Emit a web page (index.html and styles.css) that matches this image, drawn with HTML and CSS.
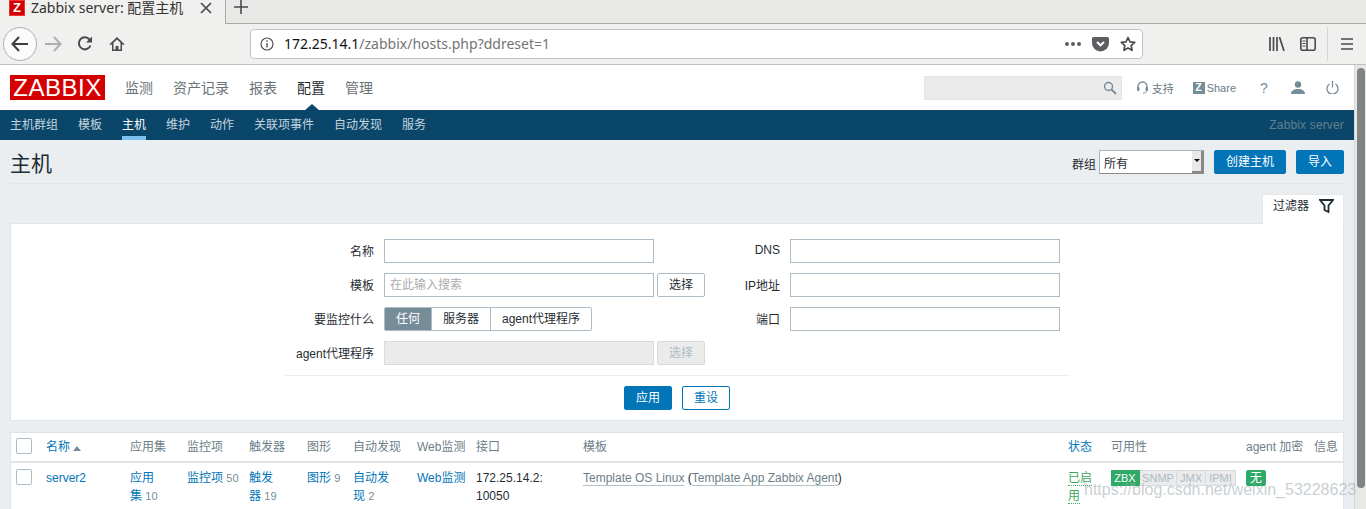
FILE: index.html
```html
<!DOCTYPE html>
<html lang="zh">
<head>
<meta charset="utf-8">
<title>Zabbix server: 配置主机</title>
<link rel="stylesheet" href="styles.css">
</head>
<body>
<div class="tabbar">
  <div class="tab">
    <span class="favicon">Z</span>
    <span class="tab-title">Zabbix server: 配置主机</span>
    <svg class="tab-close" width="12" height="12" viewBox="0 0 12 12"><path d="M1 1l10 10M11 1L1 11" stroke="#4a4a4f" stroke-width="1.7"/></svg>
  </div>
  <div class="newtab"><svg width="14" height="14" viewBox="0 0 14 14"><path d="M7 0v14M0 7h14" stroke="#4a4a4f" stroke-width="1.6"/></svg></div>
</div>
<div class="toolbar">
  <div class="backbtn"><svg width="18" height="16" viewBox="0 0 18 16"><path d="M8 1L1.500 8 8 15M2 8h15" fill="none" stroke="#3d3d40" stroke-width="2"/></svg></div>
  <svg class="ticon fwd" width="17" height="16" viewBox="0 0 17 16"><path d="M9 1l6.500 7L9 15M15 8H0" fill="none" stroke="#aeaeb0" stroke-width="2"/></svg>
  <svg class="ticon reload" width="16" height="16" viewBox="0 0 16 16"><path d="M13.500 9.500A6 6 0 1 1 12.500 3.500" fill="none" stroke="#4a4a4f" stroke-width="2"/><path d="M15 .5v6H9z" fill="#4a4a4f"/></svg>
  <svg class="ticon home" width="16" height="16" viewBox="0 0 16 16"><path d="M8 1L.5 8.200l1.200 1.100L3 8.100V15h10V8.100l1.300 1.200 1.200-1.100zM6.500 13.500V10h3v3.500H11.500V6.800L8 3.500 4.500 6.800v6.700z" fill="#4a4a4f" fill-rule="evenodd"/></svg>
  <div class="urlbar">
    <svg class="info" width="14" height="14" viewBox="0 0 14 14"><circle cx="7" cy="7" r="6" fill="none" stroke="#55555a" stroke-width="1.200"/><path d="M7 6v4.500M7 3.200v1.600" stroke="#55555a" stroke-width="1.400"/></svg>
    <span class="url"><b>172.25.14.1</b>/zabbix/hosts.php?ddreset=1</span>
    <span class="dots"><i></i><i></i><i></i></span>
    <svg class="pocket" width="17" height="16" viewBox="0 0 17 16"><path d="M1.500 1h14A1.500 1.500 0 0 1 17 2.500V7A8.500 8.500 0 0 1 0 7V2.500A1.500 1.500 0 0 1 1.500 1z" fill="#5f5f63"/><path d="M5 6l3.500 3.300L12 6" fill="none" stroke="#fff" stroke-width="2"/></svg>
    <svg class="star" width="16" height="16" viewBox="0 0 16 16"><path d="M8 1.500l2 4.300 4.700.6-3.500 3.200.9 4.700L8 12l-4.100 2.300.9-4.700L1.300 6.400 6 5.800z" fill="none" stroke="#4a4a4f" stroke-width="1.700" stroke-linejoin="round"/></svg>
  </div>
  <svg class="ticon lib" width="16" height="14" viewBox="0 0 16 14"><path d="M1 0v14M4.500 0v14M8 0v14M10.500 0l4.500 14" stroke="#4a4a4f" stroke-width="1.700"/></svg>
  <svg class="ticon side" width="16" height="14" viewBox="0 0 16 14"><rect x=".8" y=".8" width="14.400" height="12.400" rx="2" fill="none" stroke="#4a4a4f" stroke-width="1.600"/><path d="M7 1v12" stroke="#4a4a4f" stroke-width="1.600"/><path d="M2.500 4H5.500M2.500 6.500H5.500M2.500 9H5.500" stroke="#4a4a4f"/></svg>
  <span class="tsep"></span>
  <svg class="ticon menu" width="12" height="12" viewBox="0 0 12 12"><path d="M0 1h12M0 6h12M0 11h12" stroke="#4a4a4f" stroke-width="1.700"/></svg>
</div>
<div class="viewport">
  <div class="page">
    <header class="topnav">
      <div class="logo">ZABBIX</div>
      <nav class="mainmenu">
        <a>监测</a><a>资产记录</a><a>报表</a><a class="current">配置</a><a>管理</a>
      </nav>
      <div class="topright">
        <div class="search"><svg width="14" height="14" viewBox="0 0 14 14"><circle cx="5.500" cy="5.500" r="4" fill="none" stroke="#768d99" stroke-width="1.500"/><path d="M8.500 8.500L13 13" stroke="#768d99" stroke-width="1.800"/></svg></div>
        <a class="tl support"><svg width="11" height="13" viewBox="0 0 11 13"><path d="M1 8V5.500a4.500 4.500 0 0 1 9 0V8" fill="none" stroke="#768d99" stroke-width="1.400"/><rect x="0" y="6" width="2.500" height="4" rx="1" fill="#768d99"/><rect x="8.500" y="6" width="2.500" height="4" rx="1" fill="#768d99"/><path d="M9.500 10c0 1.500-1.500 2-3.500 2" fill="none" stroke="#768d99"/></svg>支持</a>
        <a class="tl share"><span class="zbox">Z</span>Share</a>
        <a class="tl help">?</a>
        <svg class="tico user" width="14" height="13" viewBox="0 0 14 13"><circle cx="7" cy="3.500" r="3.200" fill="#768d99"/><path d="M0 13c0-3.500 3-5 7-5s7 1.500 7 5z" fill="#768d99"/></svg>
        <svg class="tico power" width="13" height="13" viewBox="0 0 13 13"><path d="M3.500 3a5.500 5.500 0 1 0 6 0" fill="none" stroke="#768d99" stroke-width="1.300"/><path d="M6.500 0v6.500" stroke="#768d99" stroke-width="1.300"/></svg>
      </div>
    </header>
    <div class="subnav">
      <a>主机群组</a><a>模板</a><a class="current">主机</a><a>维护</a><a>动作</a><a>关联项事件</a><a>自动发现</a><a>服务</a>
      <span class="server">Zabbix server</span>
    </div>
    <main class="content">
      <div class="headrow">
        <h1>主机</h1>
        <div class="headctl">
          <label class="grouplabel">群组</label>
          <div class="selectbox"><span class="selval">所有</span><span class="selbtn"><i></i></span></div>
          <button class="btn primary create">创建主机</button>
          <button class="btn primary import">导入</button>
        </div>
      </div>
      <div class="filtertabrow">
        <div class="filtertab">过滤器<svg width="15" height="14" viewBox="0 0 15 14"><path d="M1 1h13L9.500 6.500V13L5.500 11V6.500z" fill="none" stroke="#1f2c33" stroke-width="1.800"/></svg></div>
      </div>
      <section class="filter">
        <div class="filtercols">
          <div class="fcol left">
            <div class="frow"><label>名称</label><div class="input wide"></div></div>
            <div class="frow"><label>模板</label><div class="input wide ph">在此输入搜索</div><button class="btn ghost">选择</button></div>
            <div class="frow"><label>要监控什么</label>
              <div class="radio"><span class="on">任何</span><span>服务器</span><span>agent代理程序</span></div></div>
            <div class="frow"><label>agent代理程序</label><div class="input wide disabled"></div><button class="btn ghost dis">选择</button></div>
          </div>
          <div class="fcol right">
            <div class="frow"><label>DNS</label><div class="input wide"></div></div>
            <div class="frow"><label>IP地址</label><div class="input wide"></div></div>
            <div class="frow"><label>端口</label><div class="input wide"></div></div>
          </div>
        </div>
        <div class="factions">
          <button class="btn primary apply">应用</button>
          <button class="btn outline">重设</button>
        </div>
      </section>
      <section class="hosts">
        <div class="trow thead">
          <div class="c c-check"><span class="check"></span></div>
          <div class="c c-name"><a>名称</a><span class="sort"></span></div>
          <div class="c c-app">应用集</div>
          <div class="c c-item">监控项</div>
          <div class="c c-trig">触发器</div>
          <div class="c c-graph">图形</div>
          <div class="c c-disc">自动发现</div>
          <div class="c c-web">Web监测</div>
          <div class="c c-if">接口</div>
          <div class="c c-tpl">模板</div>
          <div class="c c-stat"><a>状态</a></div>
          <div class="c c-avail">可用性</div>
          <div class="c c-enc">agent 加密</div>
          <div class="c c-info">信息</div>
        </div>
        <div class="trow tbody">
          <div class="c c-check"><span class="check"></span></div>
          <div class="c c-name"><a>server2</a></div>
          <div class="c c-app"><a>应用集</a> <small>10</small></div>
          <div class="c c-item"><a>监控项</a> <small>50</small></div>
          <div class="c c-trig"><a>触发器</a> <small>19</small></div>
          <div class="c c-graph"><a>图形</a> <small>9</small></div>
          <div class="c c-disc"><a>自动发现</a> <small>2</small></div>
          <div class="c c-web"><a>Web监测</a></div>
          <div class="c c-if">172.25.14.2:<br>10050</div>
          <div class="c c-tpl"><a class="tpl">Template OS Linux</a> (<a class="tpl">Template App Zabbix Agent</a>)</div>
          <div class="c c-stat"><a class="enabled">已启用</a></div>
          <div class="c c-avail"><span class="tags"><span class="tag green t-zbx">ZBX</span><span class="tag t-snmp">SNMP</span><span class="tag t-jmx">JMX</span><span class="tag t-ipmi">IPMI</span></span></div>
          <div class="c c-enc"><span class="tag green solo">无</span></div>
          <div class="c c-info"></div>
        </div>
      </section>
    </main>
  </div>
  <div class="scrollbar"><span class="thumb"></span></div>
</div>
<div class="watermark">https://blog.csdn.net/weixin_53228623</div>
</body>
</html>
```
FILE: styles.css
```css
* { box-sizing: border-box; }
html, body { margin: 0; padding: 0; height: 509px; overflow: hidden; }
body { font-family: "Liberation Sans", "Noto Sans CJK SC", sans-serif; font-size: 12px; color: #1f2c33; background: #ebeef0; position: relative; }
a { color: #0275b8; text-decoration: none; }
button { font-family: inherit; }

.tabbar { height: 24px; background: #e8e8e7; display: flex; }
.tab { width: 225px; height: 24px; background: #f0f0ee; display: flex; align-items: center; padding-bottom: 8px; }
.favicon { width: 16px; height: 16px; margin-left: 9px; background: #d40000; color: #fff; font: bold 13px/16px "Liberation Sans", sans-serif; text-align: center; box-shadow: inset 0 0 0 1px #e33; }
.tab-title { margin-left: 6px; font: 14px/20px "Noto Sans", "Noto Sans CJK SC", sans-serif; color: #333; width: 165px; white-space: nowrap; }
.tab-close { margin-left: 4px; flex: none; }
.newtab { flex: 1; border-bottom: 1px solid #a8a8a6; border-left: 1px solid #a8a8a6; padding: 0 0 0 8px; height: 24px; }
.newtab svg { display: block; }
.toolbar { height: 41px; background: #f0f0ee; border-bottom: 1px solid #c1c1c0; display: flex; align-items: center; }
.backbtn { width: 34px; height: 34px; margin-left: 3px; border: 1px solid #b0b0b0; border-radius: 50%; background: #fbfbfb; display: flex; align-items: center; justify-content: center; }
.ticon { flex: none; display: block; }
.fwd { margin-left: 8px; }
.reload { margin-left: 15px; margin-top: -1px; }
.home { margin-left: 16px; margin-top: -1px; }
.urlbar { width: 893px; height: 30px; margin-left: 125px; background: #fff; border: 1px solid #c3c3c3; border-radius: 4px; display: flex; align-items: center; padding-left: 9px; }
.url { margin-left: 10px; font: 14px/20px "Noto Sans", sans-serif; color: #737373; flex: 1; }
.url b { font-weight: 400; color: #111; }
.dots { display: flex; gap: 2px; }
.dots i { width: 4px; height: 4px; background: #5f5f63; border-radius: 50%; }
.pocket { margin-left: 11px; }
.star { margin-left: 11px; margin-right: 6px; }
.lib { margin-left: 126px; }
.side { margin-left: 15px; }
.tsep { width: 1px; height: 34px; background: #d4d4d2; margin-left: 11px; }
.menu { margin-left: 13px; }

.viewport { height: 444px; display: flex; }
.page { width: 1354px; flex: none; overflow: hidden; display: flex; flex-direction: column; }
.scrollbar { width: 12px; background: #e8e8e7; padding: 3px 0 0 2px; border-left: 1px solid #d8d8d8; }
.thumb { display: block; width: 8px; height: 420px; background: #7f8485; border-radius: 4px; }

.topnav { height: 45px; background: #fff; display: flex; align-items: center; padding: 0 10px; flex: none; }
.logo { width: 95px; height: 25px; background: #d40000; color: #fff; font-size: 24px; line-height: 25px; text-align: center; letter-spacing: .5px; }
.mainmenu { display: flex; gap: 20px; margin-left: 20px; }
.mainmenu a { font-size: 14px; color: #6a7277; line-height: 20px; position: relative; }
.mainmenu a.current { color: #1f2c33; }
.mainmenu a.current::after { content: ""; position: absolute; left: 7px; bottom: -13px; border: 7px solid transparent; border-top: 0; border-bottom-color: #0a466a; border-left-width: 8px; border-right-width: 8px; }
.topright { margin-left: auto; display: flex; align-items: center; }
.search { width: 198px; height: 24px; background: #ebebeb; border: 1px solid #e4e4e4; display: flex; align-items: center; justify-content: flex-end; padding-right: 4px; margin-right: 2px; }
.tl { color: #6b7b85; font-size: 11px; display: flex; align-items: center; }
.support { margin-left: 13px; gap: 4px; }
.share { margin-left: 19px; gap: 2px; }
.zbox { width: 12px; height: 12px; background: #768d99; color: #fff; font: bold 10px/12px "Liberation Sans", sans-serif; text-align: center; }
.help { margin-left: 24px; font-size: 14px; width: 8px; color: #768d99; }
.user { margin-left: 23px; }
.power { margin-left: 21px; margin-right: 5px; }

.subnav { height: 30px; background: #0a466a; display: flex; padding: 0 10px; gap: 20px; align-items: stretch; flex: none; }
.subnav a { color: #c4d4df; line-height: 30px; height: 30px; }
.subnav a.current { color: #fff; border-bottom: 4px solid #7bc0ee; }
.server { margin-left: auto; color: #60818f; line-height: 30px; letter-spacing: .15px; }

.content { flex: 1; padding: 0 10px; background: #ebeef0; }
.headrow { height: 44px; display: flex; align-items: center; border-bottom: 1px solid #dfe4e7; }
h1 { font-size: 21px; font-weight: 400; margin: 0; color: #1f2c33; line-height: 48px; height: 43px; }
.headctl { margin-left: auto; display: flex; align-items: center; }
.grouplabel { margin-right: 3px; margin-top: 3px; }
.selectbox { width: 105px; height: 24px; background: #fff; border: 1px solid #a9b3b9; border-right-color: #8a8a8a; border-bottom-color: #8a8a8a; display: flex; justify-content: space-between; padding-left: 4px; }
.selval { line-height: 27px; }
.selbtn { width: 11px; height: 22px; background: #e8e8e6; border-right: 2px solid #888; border-bottom: 2px solid #888; display: flex; align-items: center; justify-content: center; }
.selbtn i { border: 3px solid transparent; border-top: 3px solid #111; border-bottom: 0; }
.btn { height: 24px; border-radius: 2px; font-size: 12px; padding: 0; border: 1px solid #0275b8; line-height: 20px; }
.primary { background: #0275b8; color: #fff; }
.create { width: 72px; margin-left: 10px; }
.import { width: 48px; margin-left: 10px; }
.apply { width: 48px; }
.ghost { width: 48px; background: #fff; color: #1f2c33; border-color: #acbbc4; margin-left: 3px; }
.ghost.dis { background: #ebebeb; color: #acbbc4; border-color: #d5dbde; }
.outline { background: #fff; color: #0275b8; width: 48px; margin-left: 10px; }

.filtertabrow { display: flex; justify-content: flex-end; height: 39px; padding-top: 10px; }
.filtertab { width: 82px; height: 30px; background: #fff; border: 1px solid #e4e8ea; border-bottom: 0; display: flex; align-items: flex-start; padding: 4px 0 0 10px; line-height: 15px; gap: 10px; }
.filtertab svg { flex: none; }
.filter { background: #fff; border: 1px solid #dfe4e7; height: 198px; }
.filtercols { display: flex; padding-top: 15px; height: 141px; }
.fcol { display: flex; flex-direction: column; gap: 10px; }
.frow { display: flex; align-items: center; height: 24px; }
.frow label { padding-bottom: 2px; }
.left .frow label { width: 363px; text-align: right; margin-right: 10px; color: #1f2c33; }
.right .frow label { width: 75px; text-align: right; margin-right: 10px; }
.input { height: 24px; background: #fff; border: 1px solid #acbbc4; }
.wide { width: 270px; }
.ph { color: #acacac; padding-left: 5px; line-height: 22px; }
.disabled { background: #ebebeb; border-color: #d5dbde; }
.radio { display: flex; height: 24px; border: 1px solid #acbbc4; border-radius: 2px; }
.radio span { padding: 0 11px; line-height: 22px; border-left: 1px solid #acbbc4; }
.radio span:first-child { border-left: 0; }
.radio .on { background: #768d99; color: #fff; width: 46px; padding: 0; text-align: center; }
.factions { margin: 10px 0 0 274px; width: 785px; border-top: 1px solid #ebeef0; padding: 10px 0 0 339px; display: flex; }

.hosts { margin-top: 11px; background: #fff; border: 1px solid #dfe4e7; border-bottom: 0; height: 90px; }
.trow { display: flex; }
.thead { height: 30px; border-bottom: 2px solid #dfe4e7; color: #6d7e88; line-height: 28px; }
.thead a { line-height: 28px; }
.tbody { line-height: 18px; padding-top: 6px; }
.c { flex: none; padding-left: 5px; }
.c-check { width: 30px; }
.check { display: block; width: 16px; height: 16px; border: 1px solid #acbbc4; border-radius: 2px; background: #fff; margin-top: 5px; }
.tbody .check { margin-top: 0; }
.c-name { width: 84px; }
.sort { display: inline-block; margin-left: 3px; border: 4px solid transparent; border-top: 0; border-bottom: 5px solid #768d99; }
.c-app { width: 57px; padding-right: 21px; }
.thead .c-app { padding-right: 0; }
.c-item { width: 62px; }
.c-trig { width: 58px; padding-right: 22px; }
.thead .c-trig { padding-right: 0; }
.c-graph { width: 46px; }
.c-disc { width: 69px; padding-right: 24px; }
.thead .c-disc { padding-right: 0; }
.c-web { width: 59px; padding-left: 0; white-space: nowrap; }
.c-if { width: 107px; padding-left: 0; }
.c-tpl { width: 485px; padding-left: 0; }
.c-stat { width: 43px; padding-left: 0; padding-right: 13px; }
.c-avail { width: 135px; padding-left: 0; }
.c-enc { width: 68px; padding-left: 0; white-space: nowrap; }
.c-info { width: 30px; padding-left: 0; }
small { font-size: 11px; color: #768d99; }
.tpl { color: #6d7e88; border-bottom: 1px solid #b5c2c9; }
.enabled { color: #3fa85c; border-bottom: 1px dotted #3fa85c; }
.tags { display: inline-flex; vertical-align: top; margin-top: 1px; }
.tag { height: 16px; line-height: 15px; font-size: 11px; padding: 0; text-align: center; background: #ebebeb; color: #acbbc4; border: 1px solid #d5dbde; border-left: 0; }
.t-zbx { width: 29px; }
.t-snmp { width: 37px; }
.t-jmx { width: 29px; }
.t-ipmi { width: 30px; }
.tag.green { background: #2fa968; color: #fff; border-color: #2fa968; }
.solo { display: inline-block; margin-top: 1px; border-radius: 2px; padding: 0 3px; font-size: 12px; border-left: 1px solid #2fa968; }

.watermark { position: absolute; left: 1084px; top: 481px; font-size: 16px; color: rgba(170,180,185,.65); white-space: nowrap; }
```
